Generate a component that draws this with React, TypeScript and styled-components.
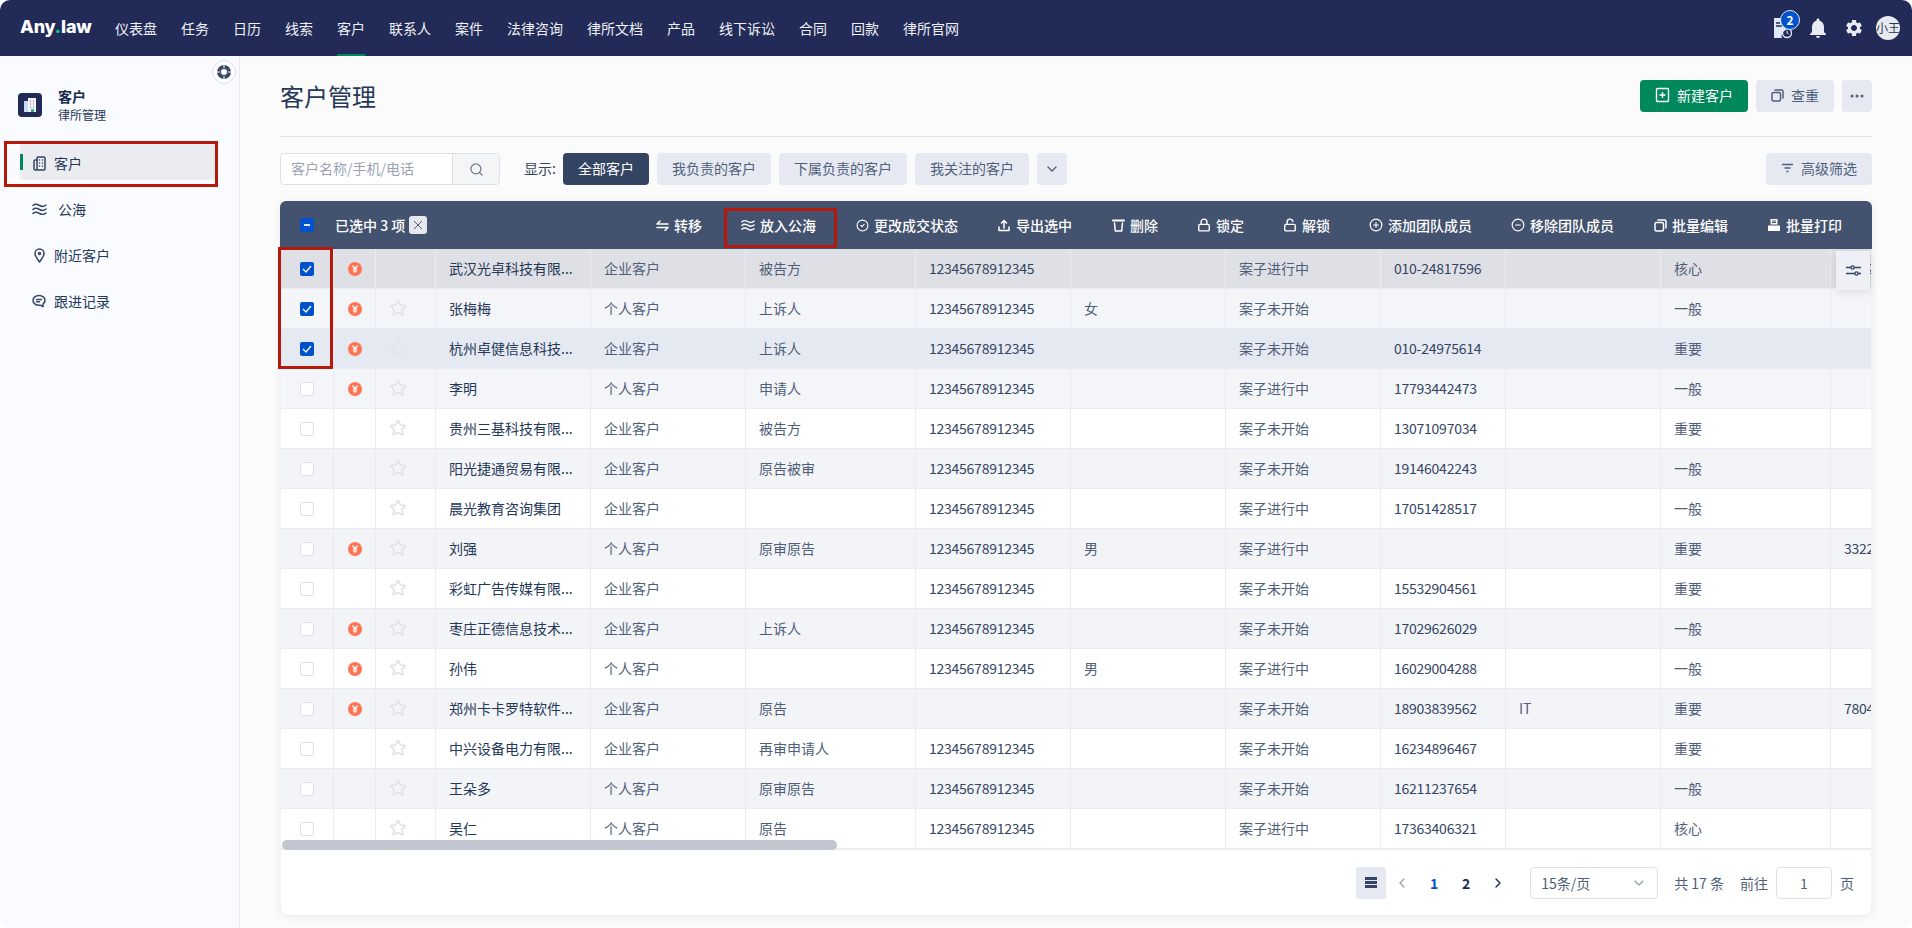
import { FC, ReactNode } from 'react';
import styled, { createGlobalStyle } from 'styled-components';
import { Search, ChevronDown, ChevronLeft, ChevronRight, Star, CirclePlus, CircleMinus, CircleCheck, Lock, LockOpen } from 'lucide-react';
import { MdNotifications, MdSettings } from 'react-icons/md';

const GlobalStyle = createGlobalStyle`
  html, body {
    margin: 0;
    padding: 0;
    background: #ffffff;
  }
  * {
    box-sizing: border-box;
  }
  body {
    font-family: "Noto Sans CJK SC", "Noto Sans", sans-serif;
    font-size: 14px;
  }
`;

const Shell = styled.div`
  position: relative;
  width: 1912px;
  height: 928px;
  overflow: hidden;
  border-radius: 10px;
  display: flex;
  flex-direction: column;
  background: #fbfbfb;
`;

const TopBar = styled.header`
  height: 56px;
  flex: none;
  background: #222b57;
  display: flex;
  align-items: center;
  padding: 0 12px 0 20px;
`;

const Logo = styled.div`
  width: 75px;
  margin-right: 8px;
  margin-top: -4px;
  color: #ffffff;
  font-family: "Inter", sans-serif;
  font-weight: 800;
  font-size: 18px;
  letter-spacing: -0.2px;
  white-space: nowrap;

  span {
    color: #00c98a;
  }
`;

const TopNav = styled.nav`
  display: flex;
  height: 100%;
  flex: 1;
`;

const TopLink = styled.a<{ $active?: boolean }>`
  position: relative;
  padding: 0 12px;
  line-height: 56px;
  color: #eef0f6;
  font-size: 14px;

  &::after {
    content: '';
    display: ${(p) => (p.$active ? 'block' : 'none')};
    position: absolute;
    left: 12px;
    right: 12px;
    bottom: 0;
    height: 2px;
    background: #00875a;
  }
`;

const TopIcon = styled.div`
  position: relative;
  width: 36px;
  height: 36px;
  display: flex;
  align-items: center;
  justify-content: center;
  color: #e9ebf2;
`;

const Badge = styled.span`
  position: absolute;
  left: 16px;
  top: 0;
  width: 20px;
  height: 20px;
  border-radius: 50%;
  background: #0052cc;
  border: 1px solid #dfe6f5;
  color: #ffffff;
  font-size: 12px;
  font-weight: 700;
  line-height: 18px;
  text-align: center;
`;

const Avatar = styled.div`
  width: 24px;
  height: 24px;
  margin-left: 4px;
  border-radius: 50%;
  background: #e9eaee;
  color: #253858;
  font-size: 12px;
  line-height: 24px;
  text-align: center;
  overflow: hidden;
  white-space: nowrap;
`;

const Body = styled.div`
  flex: 1;
  display: flex;
  min-height: 0;
`;

const Sidebar = styled.aside`
  position: relative;
  width: 240px;
  flex: none;
  background: #fafbfe;
  border-right: 1px solid #e9eaee;
  padding-top: 30px;
`;

const CollapseButton = styled.div`
  position: absolute;
  left: 212px;
  top: 4px;
  width: 24px;
  height: 24px;
  border-radius: 50%;
  background: #ffffff;
  border: 1px solid #dfe1e6;
  display: flex;
  align-items: center;
  justify-content: center;
`;

const SideHead = styled.div`
  display: flex;
  align-items: center;
  padding-left: 18px;
  gap: 16px;
  margin-bottom: 20px;
`;

const SideLogo = styled.div`
  width: 24px;
  height: 24px;
  border-radius: 4px;
  background: #222b57;
  display: flex;
  align-items: center;
  justify-content: center;
`;

const SideTitle = styled.div`
  font-size: 14px;
  font-weight: 700;
  line-height: 20px;
  color: #172b4d;
`;

const SideSub = styled.div`
  font-size: 12px;
  line-height: 18px;
  color: #253858;
`;

const SideNav = styled.nav`
  display: flex;
  flex-direction: column;
  gap: 10px;
  margin-left: 20px;
  width: 196px;
`;

const SideItem = styled.a<{ $active?: boolean }>`
  position: relative;
  height: 36px;
  display: flex;
  align-items: center;
  gap: 8px;
  padding: 2px 0 0 12px;
  border-radius: 3px;
  color: #253858;
  background: ${(p) => (p.$active ? '#ebecf0' : 'transparent')};

  &::before {
    content: '';
    display: ${(p) => (p.$active ? 'block' : 'none')};
    position: absolute;
    left: 0;
    top: 10px;
    width: 3px;
    height: 16px;
    background: #00875a;
  }
`;

const SideIcon = styled.span<{ $wide?: boolean }>`
  width: ${(p) => (p.$wide ? '18px' : '14px')};
  display: flex;
  justify-content: ${(p) => (p.$wide ? 'flex-start' : 'center')};
  color: #344563;
`;

const Main = styled.main`
  flex: 1;
  min-width: 0;
  padding: 0 40px;
`;

const PageHead = styled.div`
  display: flex;
  align-items: center;
  justify-content: space-between;
  height: 81px;
  border-bottom: 1px solid #e3e5ea;
`;

const PageTitle = styled.h1`
  margin: -2px 0 0;
  font-size: 24px;
  font-weight: 400;
  color: #253858;
`;

const Actions = styled.div`
  display: flex;
  gap: 8px;
`;

const Button = styled.button<{ $variant?: 'primary' | 'dark' }>`
  height: 32px;
  padding: 0 15px 2px;
  border: 0;
  border-radius: 4px;
  font: inherit;
  font-size: 14px;
  display: inline-flex;
  align-items: center;
  gap: 7px;
  white-space: nowrap;
  background: ${(p) => (p.$variant === 'primary' ? '#00875a' : p.$variant === 'dark' ? '#344563' : '#e6e9f2')};
  color: ${(p) => (p.$variant ? '#ffffff' : '#505f79')};
`;

const SquareButton = styled(Button)`
  width: 30px;
  padding: 0;
  justify-content: center;
`;

const Toolbar = styled.div`
  display: flex;
  align-items: center;
  height: 32px;
  margin: 16px 0;
`;

const SearchBox = styled.div`
  width: 220px;
  height: 32px;
  display: flex;
  border: 1px solid #dfe1e6;
  border-radius: 4px;
  background: #ffffff;
  overflow: hidden;
`;

const SearchInput = styled.div`
  flex: 1;
  padding-left: 10px;
  line-height: 28px;
  color: #9aa3b4;
  font-size: 14px;
  white-space: nowrap;
`;

const SearchButton = styled.div`
  width: 47px;
  background: #f4f5f7;
  border-left: 1px solid #dfe1e6;
  display: flex;
  align-items: center;
  justify-content: center;
  color: #6b778c;
`;

const ToolLabel = styled.span`
  margin: 0 7px 2px 24px;
  color: #344563;
`;

const Filters = styled.div`
  display: flex;
  gap: 8px;
  flex: 1;
`;

const Panel = styled.section`
  position: relative;
  height: 714px;
  margin: 0 1px;
  background: #ffffff;
  border-radius: 0 0 8px 8px;
  box-shadow: 0 2px 8px rgba(23, 43, 77, 0.08);
`;

const BatchBar = styled.div`
  height: 48px;
  margin: 0 -1px;
  border-radius: 6px 6px 0 0;
  background: #43526e;
  display: flex;
  align-items: center;
  padding: 0 30px 0 20px;
  color: #ffffff;
`;

const BatchBox = styled.span`
  width: 14px;
  height: 14px;
  border-radius: 2px;
  background: #0052cc;
  display: flex;
  align-items: center;
  justify-content: center;
  margin-right: 21px;

  &::after {
    content: '';
    width: 6px;
    height: 2px;
    background: #dfe6f5;
  }
`;

const BatchCount = styled.span`
  font-weight: 500;
  white-space: nowrap;
`;

const ClearTag = styled.span`
  width: 18px;
  height: 18px;
  margin-left: 4px;
  border-radius: 3px;
  background: #e6e8ee;
  color: #505f79;
  display: flex;
  align-items: center;
  justify-content: center;
`;

const BatchActions = styled.div`
  margin-left: auto;
  display: flex;
  gap: 39px;
`;

const BatchAction = styled.span`
  display: flex;
  align-items: center;
  gap: 5px;
  white-space: nowrap;
  font-weight: 500;
`;

const BatchIcon = styled.span`
  width: 14px;
  height: 14px;
  display: flex;
  align-items: center;
  justify-content: center;
`;

const TableClip = styled.div`
  overflow: hidden;
`;

const TableBody = styled.div`
  height: 600px;
  width: 1800px;
`;

const Row = styled.div<{ $bg: string }>`
  height: 40px;
  display: grid;
  grid-template-columns: 53px 42px 60px 155px 155px 170px 155px 155px 155px 125px 155px 170px 200px;
  background: ${(p) => p.$bg};
  border-bottom: 1px solid #e9ecf2;
`;

const Cell = styled.div<{ $strong?: boolean; $center?: boolean }>`
  display: flex;
  align-items: center;
  justify-content: ${(p) => (p.$center ? 'center' : 'flex-start')};
  padding: ${(p) => (p.$center ? '0' : '0 13px 2px')};
  border-right: 1px solid #e9ecf2;
  color: ${(p) => (p.$strong ? '#253858' : '#505f79')};
  font-size: 14px;
  white-space: nowrap;
  overflow: hidden;
`;

const Digits = styled.span`
  letter-spacing: -0.25px;
  color: #344563;
`;

const CheckBox = styled.span<{ $checked?: boolean }>`
  width: 14px;
  height: 14px;
  border-radius: 2px;
  background: ${(p) => (p.$checked ? '#0052cc' : '#ffffff')};
  border: ${(p) => (p.$checked ? '0' : '1px solid #dfe1e6')};
  display: flex;
  align-items: center;
  justify-content: center;
`;

const SettingsTab = styled.div`
  position: absolute;
  right: 1px;
  top: 50px;
  width: 34px;
  height: 39px;
  background: #eef0f6;
  box-shadow: 0 2px 8px rgba(23, 43, 77, 0.12);
  display: flex;
  align-items: center;
  justify-content: center;
`;

const ScrollThumb = styled.div`
  position: absolute;
  left: 1px;
  top: 639px;
  width: 555px;
  height: 10px;
  border-radius: 5px;
  background: #c1c5cf;
`;

const Footer = styled.div`
  height: 66px;
  border-top: 1px solid #e9ecf2;
  display: flex;
  align-items: center;
  justify-content: flex-end;
  padding-right: 17px;
  color: #505f79;
`;

const ListToggle = styled.div`
  width: 30px;
  height: 32px;
  border-radius: 3px;
  background: #e6e9f2;
  display: flex;
  align-items: center;
  justify-content: center;
`;

const PageCell = styled.span<{ $current?: boolean; $dim?: boolean }>`
  width: 32px;
  text-align: center;
  font-weight: 600;
  display: flex;
  justify-content: center;
  color: ${(p) => (p.$current ? '#0052cc' : p.$dim ? '#97a0af' : '#172b4d')};
`;

const SizeSelect = styled.div`
  width: 128px;
  height: 32px;
  margin: 0 16px;
  padding: 0 10px;
  border: 1px solid #dfe1e6;
  border-radius: 4px;
  display: flex;
  align-items: center;
  justify-content: space-between;
  color: #505f79;
`;

const Total = styled.span`
  margin-right: 16px;
  white-space: nowrap;
`;

const JumpInput = styled.div`
  width: 56px;
  height: 32px;
  margin: 0 8px;
  border: 1px solid #dfe1e6;
  border-radius: 4px;
  text-align: center;
  line-height: 30px;
`;

const Mark = styled.div<{ $x: number; $y: number; $w: number; $h: number }>`
  position: absolute;
  left: ${(p) => p.$x}px;
  top: ${(p) => p.$y}px;
  width: ${(p) => p.$w}px;
  height: ${(p) => p.$h}px;
  border: 3px solid #b5190c;
  pointer-events: none;
`;

const Svg: FC<{ size?: number; w?: number; h?: number; children: ReactNode; color?: string }> = ({ size = 14, w, h, children, color = 'currentColor' }) => (
  <svg width={w ?? size} height={h ?? size} viewBox={`0 0 ${w ?? size} ${h ?? size}`} fill="none" stroke={color} strokeWidth={1.5} strokeLinecap="round" strokeLinejoin="round">
    {children}
  </svg>
);

const BuildingIcon = () => (
  <Svg w={13} h={15}>
    <rect x="4" y="1" width="8" height="13" rx="1" />
    <path d="M4 4H2a1 1 0 0 0-1 1v8a1 1 0 0 0 1 1h2" />
    <path d="M6.500 4h0M9.500 4h0M6.500 7h0M9.500 7h0M6.500 10h0M9.500 10h0" strokeWidth={1.600} />
  </Svg>
);

const Waves: FC<{ color?: string; w?: number }> = ({ color = '#344563', w = 15 }) => (
  <svg width={w} height={12} viewBox="0 0 15 12" fill="none" stroke={color} strokeWidth={1.5} strokeLinecap="round">
    <path d="M1 2.500c2-2 4-1.500 6.500 0s4 1.500 6.500-.5" />
    <path d="M1 6.500c2-2 4-1.500 6.500 0s4 1.500 6.500-.5" />
    <path d="M1 10.500c2-2 4-1.500 6.500 0s4 1.500 6.500-.5" />
  </svg>
);

const PinIcon = () => (
  <Svg w={11} h={15}>
    <path d="M5.500 14C3 10.500 1 8 1 5.500a4.500 4.500 0 0 1 9 0C10 8 8 10.500 5.500 14z" />
    <circle cx="5.500" cy="5.500" r="1" />
  </Svg>
);

const ChatIcon = () => (
  <Svg w={14} h={14}>
    <path d="M7 1.500C3.700 1.500 1 3.600 1 6.400s2.700 4.900 6 4.900c.5 0 1 0 1.500-.1l2.500 1.500V10c1.200-.9 2-2.200 2-3.600C13 3.600 10.300 1.500 7 1.500z" />
    <path d="M4.500 5.500h5M4.500 7.800h3" />
  </Svg>
);

const TransferIcon = () => (
  <Svg w={13} h={11}>
    <path d="M1 4h11M1 4l3-3" />
    <path d="M12 7.500H1M12 7.500l-3 3" />
  </Svg>
);

const UploadIcon = () => (
  <Svg w={12} h={13}>
    <path d="M6 9V1.500M3.500 4L6 1.500 8.500 4" />
    <path d="M1 8v3.500h10V8" />
  </Svg>
);

const TrashIcon = () => (
  <Svg w={13} h={13}>
    <path d="M1 1.500h11" strokeWidth={2} />
    <path d="M2.500 4l.8 8h6.400l.8-8" />
  </Svg>
);

const CopyIcon = () => (
  <Svg w={13} h={13}>
    <rect x="1" y="3.500" width="8.500" height="8.500" rx="1.500" />
    <path d="M4 1h6.500A1.500 1.500 0 0 1 12 2.500V9" />
  </Svg>
);

const PrintIcon = () => (
  <svg width="14" height="14" viewBox="0 0 14 14" fill="currentColor">
    <path d="M3.500 1h7v5.500h-7zM1 7.500h12V13H1z" />
    <path d="M5 3h4M5 4.500h4" stroke="#43526e" />
  </svg>
);

const FileClockIcon = () => (
  <svg width="20" height="22" viewBox="0 0 20 22">
    <path d="M2 1h12v12a6 6 0 0 0-4 8H2z" fill="#dfe6f5" />
    <path d="M4 6h4M4 9h6" stroke="#222b57" strokeWidth="1.300" />
    <circle cx="15" cy="16" r="4.500" fill="none" stroke="#dfe6f5" strokeWidth="1.400" />
    <path d="M15 13.500V16l1.500 1" stroke="#dfe6f5" fill="none" />
  </svg>
);

const YuanIcon = () => (
  <svg width="14" height="14" viewBox="0 0 14 14">
    <circle cx="7" cy="7" r="7" fill="#ff7452" />
    <path d="M4.500 3.500L7 6.500l2.500-3M7 6.500v4.500M4.800 7h4.400M4.800 9h4.400" fill="none" stroke="#ffffff" strokeWidth="1.200" />
  </svg>
);

const Tick = () => (
  <svg width="10" height="8" viewBox="0 0 10 8" fill="none" stroke="#ffffff" strokeWidth="1.300">
    <path d="M1 4l3 3 5-6" />
  </svg>
);

const SliderIcon = () => (
  <svg width="15" height="13" viewBox="0 0 15 13" fill="none" stroke="#344563" strokeWidth="1.400">
    <path d="M0 3.500h5M8 3.500h7M0 9.500h9M12 9.500h3" />
    <circle cx="6.500" cy="3.500" r="1.600" />
    <circle cx="10.500" cy="9.500" r="1.600" />
  </svg>
);

const ListIcon = () => (
  <svg width="12" height="11" viewBox="0 0 12 11" fill="#344563">
    <rect x="0" y="0" width="12" height="3" />
    <rect x="0" y="4" width="12" height="3" />
    <rect x="0" y="8" width="12" height="3" />
  </svg>
);

const navItems = ['仪表盘', '任务', '日历', '线索', '客户', '联系人', '案件', '法律咨询', '律所文档', '产品', '线下诉讼', '合同', '回款', '律所官网'];

const batchItems: { label: string; icon: ReactNode }[] = [
  { label: '转移', icon: <TransferIcon /> },
  { label: '放入公海', icon: <Waves color="#ffffff" /> },
  { label: '更改成交状态', icon: <CircleCheck size={13} /> },
  { label: '导出选中', icon: <UploadIcon /> },
  { label: '删除', icon: <TrashIcon /> },
  { label: '锁定', icon: <Lock size={14} strokeWidth={2.4} /> },
  { label: '解锁', icon: <LockOpen size={14} strokeWidth={2.4} /> },
  { label: '添加团队成员', icon: <CirclePlus size={14} /> },
  { label: '移除团队成员', icon: <CircleMinus size={14} /> },
  { label: '批量编辑', icon: <CopyIcon /> },
  { label: '批量打印', icon: <PrintIcon /> },
];

const ID = '12345678912345';

type Customer = {
  name: string;
  type: string;
  role: string;
  id: string;
  sex: string;
  status: string;
  phone: string;
  field: string;
  level: string;
  extra: string;
  paid: boolean;
  checked?: boolean;
  star?: boolean;
};

const customers: Customer[] = [
  { name: '武汉光卓科技有限...', type: '企业客户', role: '被告方', id: ID, sex: '', status: '案子进行中', phone: '010-24817596', field: '', level: '核心', extra: '3322', paid: true, checked: true, star: false },
  { name: '张梅梅', type: '个人客户', role: '上诉人', id: ID, sex: '女', status: '案子未开始', phone: '', field: '', level: '一般', extra: '', paid: true, checked: true },
  { name: '杭州卓健信息科技...', type: '企业客户', role: '上诉人', id: ID, sex: '', status: '案子未开始', phone: '010-24975614', field: '', level: '重要', extra: '', paid: true, checked: true },
  { name: '李明', type: '个人客户', role: '申请人', id: ID, sex: '', status: '案子进行中', phone: '17793442473', field: '', level: '一般', extra: '', paid: true },
  { name: '贵州三基科技有限...', type: '企业客户', role: '被告方', id: ID, sex: '', status: '案子未开始', phone: '13071097034', field: '', level: '重要', extra: '', paid: false },
  { name: '阳光捷通贸易有限...', type: '企业客户', role: '原告被审', id: ID, sex: '', status: '案子未开始', phone: '19146042243', field: '', level: '一般', extra: '', paid: false },
  { name: '晨光教育咨询集团', type: '企业客户', role: '', id: ID, sex: '', status: '案子进行中', phone: '17051428517', field: '', level: '一般', extra: '', paid: false },
  { name: '刘强', type: '个人客户', role: '原审原告', id: ID, sex: '男', status: '案子进行中', phone: '', field: '', level: '重要', extra: '33221', paid: true },
  { name: '彩虹广告传媒有限...', type: '企业客户', role: '', id: ID, sex: '', status: '案子未开始', phone: '15532904561', field: '', level: '重要', extra: '', paid: false },
  { name: '枣庄正德信息技术...', type: '企业客户', role: '上诉人', id: ID, sex: '', status: '案子未开始', phone: '17029626029', field: '', level: '一般', extra: '', paid: true },
  { name: '孙伟', type: '个人客户', role: '', id: ID, sex: '男', status: '案子进行中', phone: '16029004288', field: '', level: '一般', extra: '', paid: true },
  { name: '郑州卡卡罗特软件...', type: '企业客户', role: '原告', id: '', sex: '', status: '案子未开始', phone: '18903839562', field: 'IT', level: '重要', extra: '78045', paid: true },
  { name: '中兴设备电力有限...', type: '企业客户', role: '再审申请人', id: ID, sex: '', status: '案子未开始', phone: '16234896467', field: '', level: '重要', extra: '', paid: false },
  { name: '王朵多', type: '个人客户', role: '原审原告', id: ID, sex: '', status: '案子未开始', phone: '16211237654', field: '', level: '一般', extra: '', paid: false },
  { name: '吴仁', type: '个人客户', role: '原告', id: ID, sex: '', status: '案子进行中', phone: '17363406321', field: '', level: '核心', extra: '', paid: false },
];

const rowColor = (index: number) => {
  if (index === 0) return '#dfe0e5';
  if (index === 2) return '#e5e9f2';
  if (index === 1 || index === 3) return '#f4f5f8';
  return index % 2 === 1 ? '#f3f4f7' : '#ffffff';
};

export default function App() {
  return (
    <>
      <GlobalStyle />
      <Shell>
        <TopBar>
          <Logo>
            Any<span>.</span>law
          </Logo>
          <TopNav>
            {navItems.map((item) => (
              <TopLink key={item} $active={item === '客户'}>
                {item}
              </TopLink>
            ))}
          </TopNav>
          <TopIcon>
            <FileClockIcon />
            <Badge>2</Badge>
          </TopIcon>
          <TopIcon>
            <MdNotifications size={24} />
          </TopIcon>
          <TopIcon>
            <MdSettings size={20} />
          </TopIcon>
          <Avatar>小王</Avatar>
        </TopBar>
        <Body>
          <Sidebar>
            <CollapseButton>
              <svg width="14" height="14" viewBox="0 0 14 14">
                <circle cx="7" cy="7" r="7" fill="#3b4a66" />
                <circle cx="7" cy="7" r="3" fill="#ffffff" />
                <path d="M7 0v3M7 11v3M0 7h3M11 7h3" stroke="#ffffff" strokeWidth="1" />
              </svg>
            </CollapseButton>
            <SideHead>
              <SideLogo>
                <svg width="14" height="16" viewBox="0 0 14 16">
                  <rect x="1" y="4" width="5" height="11" fill="#c7dcf5" />
                  <rect x="5" y="1" width="8" height="14" fill="#f4f5f7" />
                  <path d="M7 4h1M10 4h1M7 7h1M10 7h1M7 10h1M10 10h1" stroke="#6554c0" />
                  <path d="M8 12h3v3H8z" fill="#36b37e" />
                </svg>
              </SideLogo>
              <div>
                <SideTitle>客户</SideTitle>
                <SideSub>律所管理</SideSub>
              </div>
            </SideHead>
            <SideNav>
              <SideItem $active>
                <SideIcon>
                  <BuildingIcon />
                </SideIcon>
                客户
              </SideItem>
              <SideItem>
                <SideIcon $wide>
                  <Waves />
                </SideIcon>
                公海
              </SideItem>
              <SideItem>
                <SideIcon>
                  <PinIcon />
                </SideIcon>
                附近客户
              </SideItem>
              <SideItem>
                <SideIcon>
                  <ChatIcon />
                </SideIcon>
                跟进记录
              </SideItem>
            </SideNav>
          </Sidebar>
          <Main>
            <PageHead>
              <PageTitle>客户管理</PageTitle>
              <Actions>
                <Button $variant="primary">
                  <svg width="15" height="16" viewBox="0 0 15 16" fill="none" stroke="#ffffff" strokeWidth="1.400">
                    <rect x="1.500" y="1.500" width="12" height="13" rx="1" />
                    <path d="M7.500 5v6M4.500 8h6" />
                  </svg>
                  新建客户
                </Button>
                <Button>
                  <CopyIcon />
                  <span>查重</span>
                </Button>
                <SquareButton>
                  <svg width="14" height="4" viewBox="0 0 14 4" fill="#505f79">
                    <circle cx="2" cy="2" r="1.500" />
                    <circle cx="7" cy="2" r="1.500" />
                    <circle cx="12" cy="2" r="1.500" />
                  </svg>
                </SquareButton>
              </Actions>
            </PageHead>
            <Toolbar>
              <SearchBox>
                <SearchInput>客户名称/手机/电话</SearchInput>
                <SearchButton>
                  <Search size={15} />
                </SearchButton>
              </SearchBox>
              <ToolLabel>显示:</ToolLabel>
              <Filters>
                <Button $variant="dark">全部客户</Button>
                <Button>我负责的客户</Button>
                <Button>下属负责的客户</Button>
                <Button>我关注的客户</Button>
                <SquareButton>
                  <ChevronDown size={16} />
                </SquareButton>
              </Filters>
              <Button>
                <svg width="13" height="10" viewBox="0 0 13 10" fill="none" stroke="#505f79" strokeWidth="1.500">
                  <path d="M1 1.500h11M3.500 5h6M5.500 8.500h2" />
                </svg>
                高级筛选
              </Button>
            </Toolbar>
            <Panel>
              <BatchBar>
                <BatchBox />
                <BatchCount>已选中 3 项</BatchCount>
                <ClearTag>
                  <svg width="10" height="10" viewBox="0 0 10 10" fill="none" stroke="#505f79">
                    <path d="M1 1l8 8M9 1l-8 8" />
                  </svg>
                </ClearTag>
                <BatchActions>
                  {batchItems.map((item) => (
                    <BatchAction key={item.label}>
                      <BatchIcon>{item.icon}</BatchIcon>
                      {item.label}
                    </BatchAction>
                  ))}
                </BatchActions>
              </BatchBar>
              <TableClip>
                <TableBody>
                  {customers.map((c, i) => (
                    <Row key={c.name} $bg={rowColor(i)}>
                      <Cell $center>
                        <CheckBox $checked={c.checked}>{c.checked && <Tick />}</CheckBox>
                      </Cell>
                      <Cell $center>{c.paid && <YuanIcon />}</Cell>
                      <Cell>{c.star !== false && <Star size={18} color="#e3e5ec" strokeWidth={2.6} />}</Cell>
                      <Cell $strong>{c.name}</Cell>
                      <Cell>{c.type}</Cell>
                      <Cell>{c.role}</Cell>
                      <Cell>
                        <Digits>{c.id}</Digits>
                      </Cell>
                      <Cell>{c.sex}</Cell>
                      <Cell>{c.status}</Cell>
                      <Cell>
                        <Digits>{c.phone}</Digits>
                      </Cell>
                      <Cell>{c.field}</Cell>
                      <Cell>{c.level}</Cell>
                      <Cell>
                        <Digits>{c.extra}</Digits>
                      </Cell>
                    </Row>
                  ))}
                </TableBody>
              </TableClip>
              <SettingsTab>
                <SliderIcon />
              </SettingsTab>
              <ScrollThumb />
              <Footer>
                <ListToggle>
                  <ListIcon />
                </ListToggle>
                <PageCell $dim>
                  <ChevronLeft size={16} />
                </PageCell>
                <PageCell $current>1</PageCell>
                <PageCell>2</PageCell>
                <PageCell>
                  <ChevronRight size={16} />
                </PageCell>
                <SizeSelect>
                  15条/页
                  <ChevronDown size={16} color="#97a0af" />
                </SizeSelect>
                <Total>共 17 条</Total>
                前往
                <JumpInput>1</JumpInput>
                页
              </Footer>
            </Panel>
          </Main>
        </Body>
        <Mark $x={4} $y={141} $w={214} $h={46} />
        <Mark $x={724} $y={208} $w={113} $h={40} />
        <Mark $x={278} $y={247} $w={55} $h={122} />
      </Shell>
    </>
  );
}
